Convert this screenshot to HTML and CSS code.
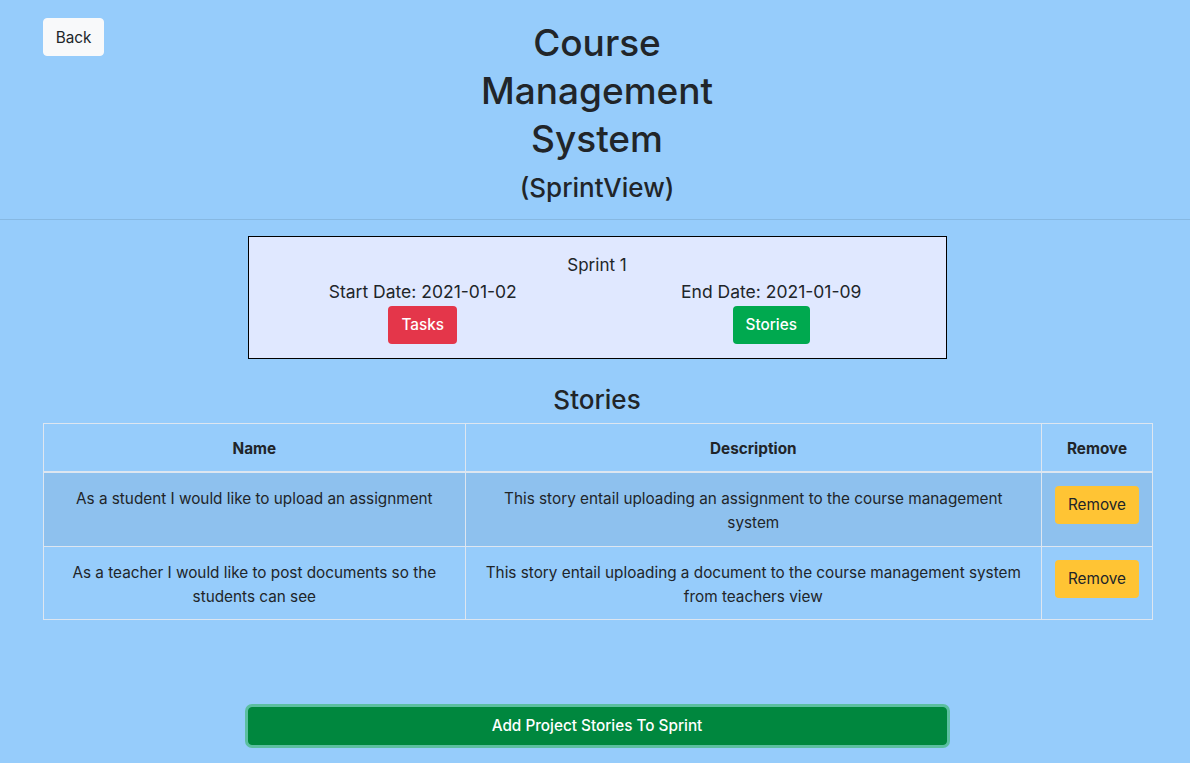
FILE: index.html
```html
<!DOCTYPE html>
<html lang="en">
<head>
<meta charset="utf-8">
<title>Course Management System (SprintView)</title>
<link rel="stylesheet" href="styles.css">
</head>
<body>
<div class="page">
  <header class="header">
    <div class="header-left">
      <button class="btn btn-light">Back</button>
    </div>
    <div class="header-center">
      <h1 class="title">Course Management System</h1>
      <h3 class="subtitle">(SprintView)</h3>
    </div>
    <div class="header-right"></div>
  </header>
  <hr class="divider">

  <section class="sprint-card">
    <div class="sprint-name">Sprint 1</div>
    <div class="sprint-cols">
      <div class="sprint-col">
        <div class="sprint-date">Start Date: 2021-01-02</div>
        <button class="btn btn-danger">Tasks</button>
      </div>
      <div class="sprint-col">
        <div class="sprint-date">End Date: 2021-01-09</div>
        <button class="btn btn-success">Stories</button>
      </div>
    </div>
  </section>

  <h3 class="section-title">Stories</h3>
  <table class="stories">
    <thead>
      <tr>
        <th class="col-name">Name</th>
        <th class="col-desc">Description</th>
        <th class="col-remove">Remove</th>
      </tr>
    </thead>
    <tbody>
      <tr class="striped">
        <td>As a student I would like to upload an assignment</td>
        <td>This story entail uploading an assignment to the course management system</td>
        <td><button class="btn btn-warning">Remove</button></td>
      </tr>
      <tr>
        <td>As a teacher I would like to post documents so the students can see</td>
        <td>This story entail uploading a document to the course management system from teachers view</td>
        <td><button class="btn btn-warning">Remove</button></td>
      </tr>
    </tbody>
  </table>

  <div class="footer-action">
    <button class="btn btn-add">Add Project Stories To Sprint</button>
  </div>
</div>
</body>
</html>
```
FILE: styles.css
```css
* { box-sizing: border-box; }
html, body { margin: 0; padding: 0; }
body {
  background: #96ccfb;
  font-family: Inter, "Noto Sans", "Liberation Sans", sans-serif;
  font-size: 15.3px;
  line-height: 24px;
  color: #212529;
  height: 763px;
  overflow: hidden;
}
.page { padding-top: 18px; }

.btn {
  display: inline-block;
  font-family: inherit;
  font-size: 15.3px;
  line-height: 24px;
  padding: 6px 12px;
  border: 1px solid transparent;
  border-radius: 4px;
  cursor: pointer;
  text-align: center;
}
.btn-light { background: #f8f9fa; color: #212529; border-color: #f8f9fa; }
.btn-danger { background: #e4364a; color: #fff; font-weight: 500; }
.btn-success { background: #00a94f; color: #fff; font-weight: 500; }
.btn-warning { background: #ffc434; color: #212529; }

.header {
  display: grid;
  grid-template-columns: 1fr 366px 1fr;
}
.header-left { padding-left: 43px; }
.header-left .btn { width: 61px; height: 38px; padding: 7px 0 5px; }
.header-center { text-align: center; padding-left: 4px; }
.title {
  margin: 1px 0 8px;
  font-size: 37px;
  line-height: 48px;
  font-weight: 500;
  padding: 0 40px;
}
.subtitle {
  margin: 0;
  font-size: 26px;
  line-height: 34px;
  font-weight: 500;
}
.divider {
  margin: 14px 0 0;
  border: 0;
  border-top: 1px solid #86b8e2;
}

.sprint-card {
  width: 699px;
  margin: 16px auto 0;
  background: #e0e8ff;
  border: 1px solid #000;
  padding: 16px 0 14px;
  text-align: center;
  position: relative;
  left: 2px;
}
.sprint-name { line-height: 24px; margin-bottom: 3px; font-size: 17px; }
.sprint-cols { display: grid; grid-template-columns: 1fr 1fr; }
.sprint-col { display: flex; flex-direction: column; align-items: center; }
.sprint-date { line-height: 24px; font-size: 17.5px; margin-bottom: 2px; }

.section-title {
  text-align: center;
  margin: 25px 0 7px;
  font-size: 26px;
  line-height: 32px;
  font-weight: 500;
  position: relative;
  left: 2px;
}

.stories {
  width: 1110px;
  margin: 0 0 0 43px;
  border-collapse: collapse;
}
.stories th, .stories td {
  border: 1px solid #dde6f0;
  text-align: center;
  vertical-align: top;
}
.stories th {
  font-weight: 700;
  border-bottom-width: 2px;
  padding: 13px 12px 10px;
}
.stories td { padding: 14px 12px 8px; }
.col-name { width: 422px; }
.col-desc { width: 577px; }
.col-remove { width: 111px; }
.stories td:last-child { padding: 13px 12px 8px; }
.stories tbody tr.striped { background: #8ec1ee; }
.stories tbody tr:first-child td { height: 74px; }
.stories tbody tr:nth-child(2) td { height: 73px; }

.footer-action {
  display: flex;
  justify-content: center;
  margin-top: 87px;
}
.btn-add {
  width: 699px;
  height: 38px;
  background: #00873e;
  color: #fff;
  font-weight: 500;
  border-color: #00873e;
  box-shadow: 0 0 0 3px #5bbfa0;
  position: relative;
  left: 2px;
}
```
